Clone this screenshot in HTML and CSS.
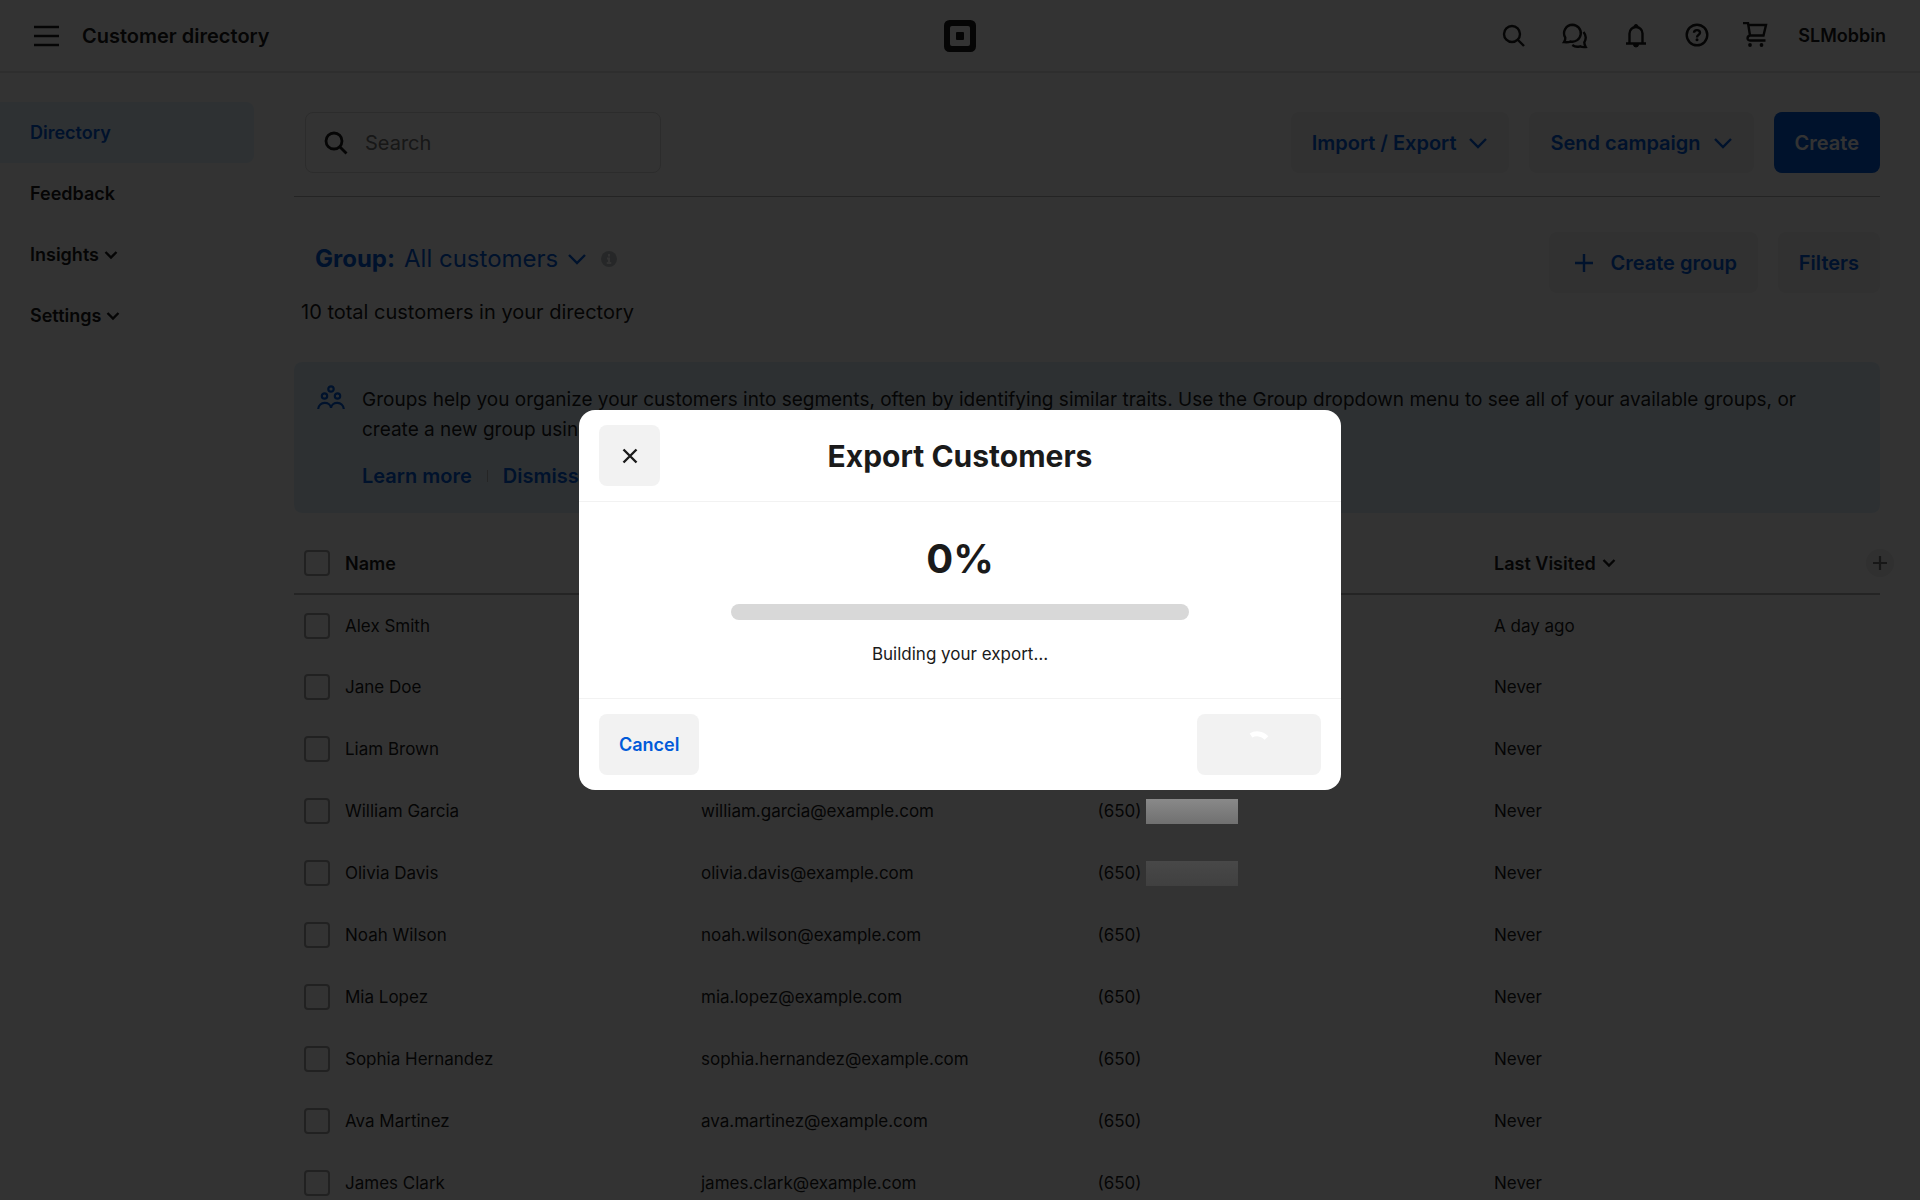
FILE: index.html
```html
<!DOCTYPE html>
<html lang="en">
<head>
    <meta charset="UTF-8">
    <meta name="viewport" content="width=device-width, initial-scale=1.0">
    <title>Customer directory</title>
    <link rel="stylesheet" href="styles.css">
</head>
<body>
    <header class="topbar">
        <div class="topbar-left">
            <button class="icon-btn" aria-label="Menu">
                <svg width="26" height="26" viewBox="0 0 26 26"><path d="M0 4h25M0 13h25M0 22h25" stroke="currentColor" stroke-width="2.600" fill="none"/></svg>
            </button>
            <h1 class="topbar-title">Customer directory</h1>
        </div>
        <a href="#" class="logo" aria-label="Home">
            <svg width="32" height="32" viewBox="0 0 32 32"><path fill="currentColor" fill-rule="evenodd" d="M5.500 0h21A5.500 5.500 0 0 1 32 5.500v21a5.500 5.500 0 0 1-5.500 5.500h-21A5.500 5.500 0 0 1 0 26.500v-21A5.500 5.500 0 0 1 5.500 0zM8 6a2 2 0 0 0-2 2v16a2 2 0 0 0 2 2h16a2 2 0 0 0 2-2V8a2 2 0 0 0-2-2zM13 12h6a1 1 0 0 1 1 1v6a1 1 0 0 1-1 1h-6a1 1 0 0 1-1-1v-6a1 1 0 0 1 1-1z"/></svg>
        </a>
        <div class="topbar-right">
            <button class="icon-btn" aria-label="Search">
                <svg width="28" height="28" viewBox="0 0 28 28" fill="none" stroke="currentColor" stroke-width="2.400"><circle cx="12" cy="12" r="8"/><path d="M18 18l6 6"/></svg>
            </button>
            <button class="icon-btn" aria-label="Messages">
                <svg width="28" height="28" viewBox="0 0 28 28" fill="none" stroke="currentColor" stroke-width="2.400"><path d="M11.500 2.700a8.500 8.500 0 1 1-2 16.800c-1.500.8-4 .8-6.500.6 1-1.500 1.500-3 1.300-4.500A8.500 8.500 0 0 1 11.500 2.700z"/><path d="M22.500 10c2.300 2.800 2.800 7 .8 10.300 0 1.800.5 3.200 1.400 4.700-2 .2-4 .1-5.500-.7-2.800.9-5.700.4-7.900-1.300"/></svg>
            </button>
            <button class="icon-btn" aria-label="Notifications">
                <svg width="28" height="28" viewBox="0 0 28 28" fill="none" stroke="currentColor" stroke-width="2.400"><path d="M4 21.500h20M7.500 21V11.500a6.500 6.500 0 0 1 13 0V21"/><path d="M12 4.500a2 2 0 0 1 4 0zM11.500 22.500a2.500 2.500 0 0 0 5 0z" fill="currentColor" stroke-width="1"/></svg>
            </button>
            <button class="icon-btn" aria-label="Help">
                <svg width="28" height="28" viewBox="0 0 28 28" fill="none" stroke="currentColor" stroke-width="2.400"><circle cx="14" cy="13" r="10.300"/><path d="M11 10.800c0-3.600 6-3.600 6 0 0 2-3 2-3 4.600"/><circle cx="14" cy="17.800" r="1.500" fill="currentColor" stroke="none"/></svg>
            </button>
            <button class="icon-btn cart" aria-label="Cart">
                <svg width="28" height="28" viewBox="0 2 28 28" fill="none" stroke="currentColor" stroke-width="2.400"><path d="M2 3h5l2 12.500h13.500L25 5H7.500M9 15.500c-3 .5-3.500 5 0 5h15.500"/><circle cx="9" cy="25" r="1.900" fill="currentColor" stroke="none"/><circle cx="20.500" cy="25" r="1.900" fill="currentColor" stroke="none"/></svg>
            </button>
            <a href="#" class="account">SLMobbin</a>
        </div>
    </header>

    <div class="layout">
        <nav class="sidebar">
            <a href="#" class="nav-link active">Directory</a>
            <a href="#" class="nav-link">Feedback</a>
            <a href="#" class="nav-link">Insights <svg class="chevron-sm" viewBox="0 0 14 14"><path d="M1.500 4l5.500 5.500L12.500 4"/></svg></a>
            <a href="#" class="nav-link">Settings <svg class="chevron-sm" viewBox="0 0 14 14"><path d="M1.500 4l5.500 5.500L12.500 4"/></svg></a>
        </nav>

        <main class="content">
            <div class="toolbar">
                <label class="search">
                    <svg width="24" height="24" viewBox="0 0 24 24" fill="none" stroke="currentColor" stroke-width="2.800"><circle cx="10" cy="10" r="8"/><path d="M16 16l6.500 6.500"/></svg>
                    <input type="search" placeholder="Search" aria-label="Search">
                </label>
                <div class="btn-row">
                    <button class="btn">Import / Export <svg class="chevron" viewBox="0 0 20 20"><path d="M2 6l8 8 8-8"/></svg></button>
                    <button class="btn">Send campaign <svg class="chevron" viewBox="0 0 20 20"><path d="M2 6l8 8 8-8"/></svg></button>
                    <button class="btn btn-primary">Create</button>
                </div>
            </div>

            <div class="group-bar">
                <div class="group-info">
                    <div class="group-line">
                        <button class="group-select"><strong>Group:</strong> All customers <svg class="chevron" viewBox="0 0 20 20"><path d="M2 6l8 8 8-8"/></svg></button>
                        <svg class="info" width="16" height="16" viewBox="0 0 16 16"><circle cx="8" cy="8" r="8" fill="#bfc4c6"/><path d="M8 3v2.500M6 7.500h2v4M5.800 12h4.400" stroke="#fff" stroke-width="2" fill="none"/></svg>
                    </div>
                    <p class="group-total">10 total customers in your directory</p>
                </div>
                <div class="btn-row">
                    <button class="btn btn-add"><svg width="20" height="20" viewBox="0 0 20 20"><path d="M10 1v18M1 10h18" stroke="currentColor" stroke-width="2.400"/></svg> Create group</button>
                    <button class="btn">Filters</button>
                </div>
            </div>

            <section class="banner">
                <svg class="banner-icon" width="28" height="26" viewBox="0 0 28 26" fill="none" stroke="currentColor" stroke-width="2.200"><circle cx="14" cy="4" r="2.700"/><circle cx="7.500" cy="11" r="2.700"/><circle cx="20.500" cy="11" r="2.700"/><path d="M1.200 24c.6-8 12-8 12.800-1 .8-7 12.200-7 12.800 1"/></svg>
                <div>
                    <p class="banner-text">Groups help you organize your customers into segments, often by identifying similar traits. Use the Group dropdown menu to see all of your available groups, or create a new group using Filters.</p>
                    <div class="banner-links">
                        <a href="#">Learn more</a>
                        <a href="#">Dismiss</a>
                    </div>
                </div>
            </section>

            <table class="customers">
                <thead>
                    <tr>
                        <th class="col-check"><input type="checkbox" aria-label="Select all"></th>
                        <th class="col-name">Name</th>
                        <th class="col-email">Email</th>
                        <th class="col-phone">Phone</th>
                        <th><div class="last-head"><span>Last Visited <svg class="chevron-sm" viewBox="0 0 14 14"><path d="M1.500 4l5.500 5.500L12.500 4"/></svg></span><button class="add-col" aria-label="Add column"><svg width="14" height="14" viewBox="0 0 14 14"><path d="M7 0v14M0 7h14" stroke="currentColor" stroke-width="2.200"/></svg></button></div></th>
                    </tr>
                </thead>
                <tbody>
                    <tr>
                        <td><input type="checkbox" aria-label="Alex Smith"></td>
                        <td>Alex Smith</td>
                        <td>alex.smith@example.com</td>
                        <td>(650)</td>
                        <td>A day ago</td>
                    </tr>
                    <tr>
                        <td><input type="checkbox" aria-label="Jane Doe"></td>
                        <td>Jane Doe</td>
                        <td>jane.doe@example.com</td>
                        <td>(650)</td>
                        <td>Never</td>
                    </tr>
                    <tr>
                        <td><input type="checkbox" aria-label="Liam Brown"></td>
                        <td>Liam Brown</td>
                        <td>liam.brown@example.com</td>
                        <td>(650)</td>
                        <td>Never</td>
                    </tr>
                    <tr>
                        <td><input type="checkbox" aria-label="William Garcia"></td>
                        <td>William Garcia</td>
                        <td>william.garcia@example.com</td>
                        <td><div class="phone">(650)<span class="mask mask-light"></span></div></td>
                        <td>Never</td>
                    </tr>
                    <tr>
                        <td><input type="checkbox" aria-label="Olivia Davis"></td>
                        <td>Olivia Davis</td>
                        <td>olivia.davis@example.com</td>
                        <td><div class="phone">(650)<span class="mask mask-dark"></span></div></td>
                        <td>Never</td>
                    </tr>
                    <tr>
                        <td><input type="checkbox" aria-label="Noah Wilson"></td>
                        <td>Noah Wilson</td>
                        <td>noah.wilson@example.com</td>
                        <td>(650)</td>
                        <td>Never</td>
                    </tr>
                    <tr>
                        <td><input type="checkbox" aria-label="Mia Lopez"></td>
                        <td>Mia Lopez</td>
                        <td>mia.lopez@example.com</td>
                        <td>(650)</td>
                        <td>Never</td>
                    </tr>
                    <tr>
                        <td><input type="checkbox" aria-label="Sophia Hernandez"></td>
                        <td>Sophia Hernandez</td>
                        <td>sophia.hernandez@example.com</td>
                        <td>(650)</td>
                        <td>Never</td>
                    </tr>
                    <tr>
                        <td><input type="checkbox" aria-label="Ava Martinez"></td>
                        <td>Ava Martinez</td>
                        <td>ava.martinez@example.com</td>
                        <td>(650)</td>
                        <td>Never</td>
                    </tr>
                    <tr>
                        <td><input type="checkbox" aria-label="James Clark"></td>
                        <td>James Clark</td>
                        <td>james.clark@example.com</td>
                        <td>(650)</td>
                        <td>Never</td>
                    </tr>
                </tbody>
            </table>
        </main>
    </div>

    <div class="overlay">
        <div class="modal" role="dialog" aria-modal="true" aria-labelledby="exportTitle">
            <div class="modal-header">
                <button class="modal-close" aria-label="Close">
                    <svg width="16" height="16" viewBox="0 0 16 16"><path d="M1.500 1.500l13 13M14.500 1.500l-13 13" stroke="currentColor" stroke-width="2.400"/></svg>
                </button>
                <h2 class="modal-title" id="exportTitle">Export Customers</h2>
            </div>
            <div class="modal-body">
                <div class="percent">0%</div>
                <div class="progress" role="progressbar" aria-label="Export progress" aria-valuenow="0" aria-valuemin="0" aria-valuemax="100"></div>
                <p class="status">Building your export…</p>
            </div>
            <div class="modal-footer">
                <button class="btn btn-small">Cancel</button>
                <button class="btn btn-loading" aria-label="Loading" disabled>
                    <svg width="24" height="24" viewBox="0 0 24 24"><path d="M4 5.500C8 3 15 3 19.500 8" stroke="#fff" stroke-width="5" fill="none"/></svg>
                </button>
            </div>
        </div>
    </div>
</body>
</html>
```

FILE: styles.css
```css
:root {
    --blue: #005ad9;
    --blue-light: #e5f3ff;
    --text: #1a1a1a;
    --gray: #f2f2f2;
    --border: #d9d9d9;
}

* {
    box-sizing: border-box;
}

body {
    margin: 0;
    height: 100vh;
    overflow: hidden;
    font-family: Inter, "Liberation Sans", sans-serif;
    font-size: 18px;
    color: var(--text);
    background: white;
}

h1, h2, p {
    margin: 0;
}

a {
    color: inherit;
    text-decoration: none;
}

button, input {
    font: inherit;
    color: inherit;
}

button {
    border: none;
    padding: 0;
    background: none;
    cursor: pointer;
}

svg {
    display: block;
    flex-shrink: 0;
}

/* Top bar */
.topbar {
    display: grid;
    grid-template-columns: 1fr auto 1fr;
    align-items: center;
    height: 73px;
    padding: 0 34px;
    border-bottom: 2px solid #e6e6e6;
}

.topbar-left {
    display: flex;
    align-items: center;
    gap: 22px;
}

.topbar-title {
    font-size: 20px;
    font-weight: 600;
}

.topbar-right {
    display: flex;
    align-items: center;
    justify-content: flex-end;
    gap: 33px;
}

.cart {
    margin-left: -3px;
}

.account {
    margin-left: -4px;
    font-weight: 600;
}

.layout {
    display: flex;
    align-items: flex-start;
}

/* Sidebar */
.sidebar {
    flex: 0 0 254px;
    padding-top: 29px;
}

.nav-link {
    display: flex;
    align-items: center;
    gap: 5px;
    height: 61px;
    padding-left: 30px;
    font-weight: 600;
}

.nav-link.active {
    color: var(--blue);
    background: var(--blue-light);
    border-radius: 0 8px 8px 0;
}

.chevron, .chevron-sm {
    fill: none;
    stroke: currentColor;
    stroke-width: 2.4;
}

.chevron {
    width: 20px;
    height: 20px;
}

.chevron-sm {
    width: 14px;
    height: 14px;
}

/* Main column */
.content {
    flex: 1;
    padding: 39px 40px 0;
}

.toolbar {
    display: flex;
    justify-content: space-between;
    padding: 0 0 23px 11px;
    border-bottom: 1px solid #b3b3b3;
}

.search {
    display: flex;
    align-items: center;
    gap: 15px;
    width: 356px;
    height: 61px;
    padding: 0 18px;
    border: 1px solid var(--border);
    border-radius: 8px;
}

.search input {
    flex: 1;
    min-width: 0;
    border: none;
    outline: none;
    background: none;
    font-size: 20px;
}

.search input::placeholder {
    color: #737373;
}

.btn-row {
    display: flex;
    gap: 20px;
}

.btn {
    display: flex;
    align-items: center;
    gap: 12px;
    height: 61px;
    padding: 0 21px;
    border-radius: 8px;
    background: var(--gray);
    color: var(--blue);
    font-size: 20px;
    font-weight: 600;
}

.btn-primary {
    background: var(--blue);
    color: white;
}

.btn-add {
    gap: 16px;
    padding-left: 25px;
}

.group-bar {
    display: flex;
    justify-content: space-between;
    align-items: flex-start;
    padding-top: 35px;
}

.group-info {
    padding: 7px 0 0 7px;
}

.group-line {
    display: flex;
    align-items: center;
    gap: 14px;
    padding-left: 14px;
}

.group-select {
    display: flex;
    align-items: center;
    gap: 9px;
    font-size: 24px;
    line-height: 40px;
    color: var(--blue);
}

.group-total {
    margin-top: 18px;
    font-size: 20px;
    line-height: 30px;
}

/* Banner */
.banner {
    display: flex;
    gap: 17px;
    margin-top: 35px;
    padding: 23px 40px 22px 23px;
    border-radius: 8px;
    background: #e2f1fb;
    font-size: 20px;
    line-height: 30px;
}

.banner-icon {
    color: var(--blue);
}

.banner-text {
    font-size: 19px;
}

.banner-links {
    display: flex;
    margin-top: 16px;
    color: var(--blue);
    font-weight: 600;
}

.banner-links a + a {
    margin-left: 15px;
    padding-left: 16px;
    background: linear-gradient(#bbb, #bbb) 0 center / 1px 12px no-repeat;
}

/* Customers table */
.customers {
    width: 100%;
    margin-top: 20px;
    border-collapse: collapse;
    table-layout: fixed;
    text-align: left;
}

.customers th {
    height: 61px;
    padding: 0;
    border-bottom: 2px solid #b3b3b3;
    font-weight: 600;
}

.customers td {
    height: 62px;
    padding: 0;
    font-size: 17px;
}

.col-check {
    width: 51px;
}

.col-name {
    width: 356px;
}

.col-email, .col-phone {
    width: 25%;
}

.customers input {
    display: block;
    appearance: none;
    width: 26px;
    height: 26px;
    margin: 0 0 0 10px;
    border: 2px solid #a6a6a6;
    border-radius: 4px;
}

.last-head {
    display: flex;
    align-items: center;
    justify-content: space-between;
}

.last-head span {
    display: flex;
    align-items: center;
    gap: 6px;
}

.add-col {
    display: flex;
    align-items: center;
    justify-content: center;
    width: 28px;
    height: 28px;
    margin-right: -14px;
    border-radius: 50%;
    background: #ededed;
    color: #737373;
}

.phone {
    display: flex;
    align-items: center;
    gap: 4px;
}

.mask {
    width: 92px;
    height: 25px;
}

/* Phone masks stay visible above the page overlay */
.mask-light {
    position: relative;
    z-index: 2;
    background: linear-gradient(#898989, #707070);
}

.mask-dark {
    position: relative;
    z-index: 2;
    background: linear-gradient(#484848, #404040);
}

/* Export modal */
.overlay {
    position: fixed;
    inset: 0;
    z-index: 1;
    display: flex;
    align-items: center;
    justify-content: center;
    background: rgba(0, 0, 0, 0.8);
}

.modal {
    width: 762px;
    max-width: 100%;
    border-radius: 16px;
    background: white;
}

.modal-header {
    display: grid;
    grid-template-columns: 61px 1fr 61px;
    align-items: center;
    padding: 15px 20px;
    border-bottom: 1px solid var(--gray);
}

.modal-close {
    display: flex;
    align-items: center;
    justify-content: center;
    height: 61px;
    border-radius: 8px;
    background: var(--gray);
}

.modal-title {
    font-size: 30px;
    font-weight: 700;
    text-align: center;
}

.modal-body {
    display: flex;
    flex-direction: column;
    align-items: center;
    padding: 32px 0 30px;
}

.percent {
    font-size: 40px;
    font-weight: 700;
    line-height: 50px;
}

.progress {
    width: 60%;
    height: 16px;
    margin: 20px 0;
    border-radius: 8px;
    background: #d8d8d8;
}

.status {
    font-size: 17px;
    line-height: 28px;
}

.modal-footer {
    display: flex;
    justify-content: space-between;
    padding: 15px 20px;
    border-top: 1px solid var(--gray);
}

.btn-small {
    padding: 0 20px;
    font-size: 18px;
}

.btn-loading {
    align-items: flex-start;
    justify-content: center;
    width: 124px;
    padding-top: 16px;
}
```
